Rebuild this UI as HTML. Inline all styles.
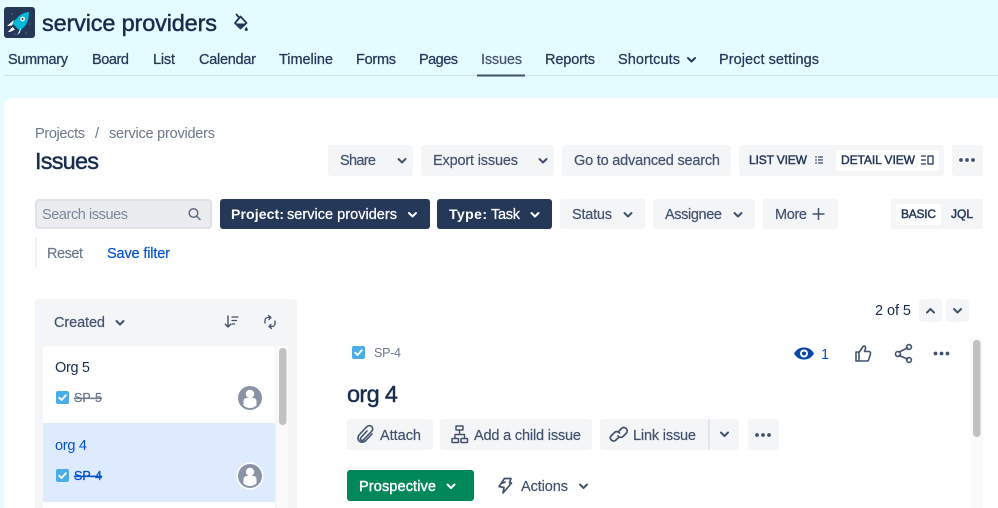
<!DOCTYPE html>
<html lang="en"><head><meta charset="utf-8"><title>Issues - service providers</title>
<style>
html,body{margin:0;padding:0;background:#E4FBFF}
body{width:998px;height:508px;overflow:hidden}
svg{display:block;filter:blur(.3px)}
text{font-family:"Liberation Sans",sans-serif;font-size:14.5px;white-space:pre}
.n{fill:#253858;stroke:#253858;stroke-width:.25;font-size:14.5px}
.b{fill:#42526E;stroke:#42526E;stroke-width:.2;font-size:14.5px}
.w{fill:#fff;stroke:#fff;stroke-width:.25;font-size:14.5px}
.g{fill:#6B778C;font-size:14.5px}
.h{fill:#172B4D;stroke:#172B4D;stroke-width:.45;font-size:23.5px}
.c{fill:#253858;stroke:#253858;stroke-width:.45;font-size:12px}
.chev{fill:none;stroke-width:2;stroke-linecap:round;stroke-linejoin:round}
.ic{fill:none;stroke:#42526E;stroke-width:1.6;stroke-linecap:round;stroke-linejoin:round}
</style></head><body>
<svg width="998" height="508" viewBox="0 0 998 508" xmlns="http://www.w3.org/2000/svg">
<defs>
<g id="dn"><path class="chev" d="M-3.5-1.5 0 2 3.5-1.5"/></g>
<g id="chk"><rect width="13" height="13" rx="2" fill="#4BADE8"/><path d="M3.3 6.8 5.6 9 9.8 4.2" fill="none" stroke="#fff" stroke-width="1.9" stroke-linecap="round" stroke-linejoin="round"/></g>
<g id="av"><circle r="12" fill="#8993A4"/><circle cy="-4" r="4.2" fill="#fff"/><path d="M-6.5 7.5V3.5Q-6.5 0 -3 0H3Q6.5 0 6.5 3.5V7.5Q3.5 10 0 10T-6.5 7.5Z" fill="#fff"/></g>
<g id="dots"><circle cx="-6" r="1.9"/><circle r="1.9"/><circle cx="6" r="1.9"/></g>
</defs>

<!-- header -->
<rect width="998" height="508" fill="#E4FBFF"/>
<rect x="4" y="7" width="31" height="31" rx="3" fill="#253858"/>
<circle cx="12" cy="14" r=".7" fill="#5d6f8f"/><circle cx="30" cy="24" r=".7" fill="#5d6f8f"/><circle cx="26" cy="33" r=".7" fill="#5d6f8f"/><circle cx="15" cy="34" r=".7" fill="#5d6f8f"/>
<path d="M29 12C24 12.500 20 14.500 17 18L12 23 14.500 25.500 17.500 28.500 20 31 25 26C28 22.500 29 17 29 12Z" fill="#00B8D9"/>
<path d="M14 20 7 26 12 25.500Z M21 28 17 35 20 32.500Z M12.500 27 8 32 10 32 15 29.500Z" fill="#fff"/>
<circle cx="22.500" cy="19" r="2.400" fill="#fff"/><circle cx="22.500" cy="19" r="1" fill="#253858"/>

<text x="42" y="31" class="h" textLength="175">service providers</text>
<path d="M236.500 14.500 239 17.500" style="fill:none;stroke:#253858;stroke-width:1.800;stroke-linecap:round"/>
<path d="M240.500 16.500 246.500 23 240.500 28.500 235 23Z" fill="none" stroke="#253858" stroke-width="1.800" stroke-linejoin="round"/>
<path d="M235.500 23.500H246L240.500 28.500Z" fill="#253858"/>
<path d="M246.300 26.500C247 28 247.800 28.500 247.800 29.500A1.500 1.500 0 0 1 244.800 29.500C244.800 28.500 245.600 28 246.300 26.500Z" fill="#253858"/>

<text x="8" y="64" class="n" textLength="60">Summary</text>
<text x="92" y="64" class="n" textLength="37">Board</text>
<text x="153" y="64" class="n" textLength="22">List</text>
<text x="199" y="64" class="n" textLength="57">Calendar</text>
<text x="279" y="64" class="n" textLength="54">Timeline</text>
<text x="356" y="64" class="n" textLength="40">Forms</text>
<text x="419" y="64" class="n" textLength="39">Pages</text>
<text x="481" y="64" class="b" textLength="41">Issues</text>
<text x="545" y="64" class="n" textLength="50">Reports</text>
<text x="618" y="64" class="n" textLength="62">Shortcuts</text>
<use href="#dn" x="691.500" y="59.500" stroke="#253858"/>
<text x="719" y="64" class="n" textLength="100">Project settings</text>
<rect x="4" y="75" width="994" height="1" fill="#CDE3EA"/>
<rect x="477" y="74.500" width="48" height="2" fill="#42526E"/>

<!-- panel -->
<rect x="4" y="98" width="1010" height="430" rx="8" fill="#fff"/>

<text x="35" y="138" class="g" textLength="50">Projects</text>
<text x="95" y="138" class="g" textLength="4">/</text>
<text x="109" y="138" class="g" textLength="106">service providers</text>
<text x="35" y="169" class="h" textLength="64">Issues</text>

<!-- top actions -->
<g fill="#F4F5F7">
<rect x="328" y="145" width="85" height="31" rx="3"/>
<rect x="421" y="145" width="133" height="31" rx="3"/>
<rect x="562" y="145" width="169" height="31" rx="3"/>
<rect x="739" y="145" width="205" height="31" rx="3"/>
<rect x="952" y="145" width="31" height="31" rx="3"/>
<rect x="560" y="199" width="85" height="30" rx="3"/>
<rect x="653" y="199" width="102" height="30" rx="3"/>
<rect x="763" y="199" width="75" height="30" rx="3"/>
<rect x="891" y="199" width="92" height="30" rx="3"/>
</g>
<rect x="836" y="150" width="103" height="21" rx="3" fill="#fff"/>
<rect x="896" y="204" width="45" height="21" rx="3" fill="#fff"/>
<text x="340" y="165" class="b" textLength="36">Share</text>
<use href="#dn" x="402" y="160.500" stroke="#42526E"/>
<text x="433" y="165" class="b" textLength="85">Export issues</text>
<use href="#dn" x="543" y="160.500" stroke="#42526E"/>
<text x="574" y="165" class="b" textLength="146">Go to advanced search</text>
<text x="749" y="164" class="c" textLength="58">LIST VIEW</text>
<g fill="#42526E"><circle cx="816" cy="157" r=".9"/><circle cx="816" cy="160" r=".9"/><circle cx="816" cy="163" r=".9"/><rect x="818" y="156.300" width="5" height="1.300"/><rect x="818" y="159.300" width="5" height="1.300"/><rect x="818" y="162.300" width="5" height="1.300"/></g>
<text x="841" y="164" class="c" textLength="74">DETAIL VIEW</text>
<path d="M921 156H926M921 160H926M921 164H926" stroke="#253858" stroke-width="1.300" fill="none"/>
<rect x="928" y="156" width="5" height="8" fill="none" stroke="#253858" stroke-width="1.300"/>
<use href="#dots" x="967" y="160" fill="#42526E"/>

<!-- filters -->
<rect x="36" y="200" width="175" height="28" rx="3" fill="#EBECF0" stroke="#DFE1E6" stroke-width="2"/>
<text x="42" y="219" fill="#7A869A" style="font-size:14.5px" textLength="86">Search issues</text>
<circle cx="193.500" cy="213" r="4.300" fill="none" stroke="#5E6C84" stroke-width="1.500"/>
<path d="M197 216.500 200 219.500" stroke="#5E6C84" stroke-width="1.500" stroke-linecap="round"/>
<rect x="220" y="199" width="210" height="30" rx="3" fill="#253858"/>
<text x="231" y="219" style="font-size:14px;font-weight:700;fill:#fff" textLength="53">Project:</text>
<text x="287" y="219" class="w" textLength="110">service providers</text>
<use href="#dn" x="412.500" y="214.500" stroke="#fff"/>
<rect x="437" y="199" width="115" height="30" rx="3" fill="#253858"/>
<text x="449" y="219" style="font-size:14px;font-weight:700;fill:#fff" textLength="38">Type:</text>
<text x="491" y="219" class="w" textLength="29">Task</text>
<use href="#dn" x="535" y="214.500" stroke="#fff"/>
<text x="572" y="219" class="b" textLength="40">Status</text>
<use href="#dn" x="628" y="214.500" stroke="#42526E"/>
<text x="665" y="219" class="b" textLength="57">Assignee</text>
<use href="#dn" x="738" y="214.500" stroke="#42526E"/>
<text x="775" y="219" class="b" textLength="32">More</text>
<path d="M818.500 208V220M812.500 214H824.500" stroke="#42526E" stroke-width="1.500"/>
<text x="901" y="218" class="c" textLength="35">BASIC</text>
<text x="951" y="218" class="c" textLength="22">JQL</text>

<rect x="35" y="237" width="2" height="31" fill="#F1F2F4"/>
<text x="47" y="258" class="g" style="stroke:#6B778C;stroke-width:.15" textLength="36">Reset</text>
<text x="107" y="258" style="font-size:14.5px;fill:#0052CC;stroke:#0052CC;stroke-width:.2" textLength="63">Save filter</text>

<!-- left list -->
<rect x="35" y="299" width="262" height="230" rx="3" fill="#F4F5F7"/>
<text x="54" y="327" class="b" textLength="51">Created</text>
<use href="#dn" x="120" y="322.500" stroke="#42526E"/>
<path d="M228 316V327M225.300 324.300 228 327 230.700 324.300" class="ic" style="stroke-width:1.400"/>
<path d="M232 317H238M232 320.500H236.500M232 324H234.500" class="ic" style="stroke-width:1.300"/>
<path d="M265 323V320.500C265 318.500 266.500 317.500 268 317.500H270.500M268.500 315.500 271 317.500 269 319.500M275 321V323.500C275 325.500 273.500 326.500 272 326.500H269.500M271.500 328.500 269 326.500 271 324.500" class="ic" style="stroke-width:1.300"/>

<rect x="43" y="346" width="232" height="170" rx="3" fill="#fff"/>
<path d="M43 423H275V502H43Z" fill="#DEEBFF"/>
<rect x="277" y="346" width="11" height="170" fill="#FAFAFA"/>
<rect x="279" y="348" width="7.500" height="77" rx="3.500" fill="#C1C1C1"/>
<text x="55" y="372" style="font-size:14.5px;fill:#172B4D" textLength="35">Org 5</text>
<use href="#chk" x="56" y="391"/>
<text x="74" y="402" style="font-size:12.500px;fill:#6B778C;stroke:#6B778C;stroke-width:.2;text-decoration:line-through" textLength="28">SP-5</text>
<use href="#av" x="250" y="398"/>
<text x="55" y="450" style="font-size:14.5px;fill:#0052CC" textLength="32">org 4</text>
<use href="#chk" x="56" y="469"/>
<text x="74" y="480" style="font-size:12.500px;fill:#0052CC;stroke:#0052CC;stroke-width:.3;text-decoration:line-through" textLength="28">SP-4</text>
<circle cx="250" cy="476" r="13.500" fill="#fff"/>
<use href="#av" x="250" y="476"/>

<!-- pager -->
<text x="875" y="315" style="font-size:14.5px;fill:#172B4D" textLength="36">2 of 5</text>
<rect x="919" y="299" width="23" height="23" rx="3" fill="#F4F5F7"/>
<rect x="946" y="299" width="23" height="23" rx="3" fill="#F4F5F7"/>
<path class="chev" stroke="#42526E" d="M927 312.500 930.500 309 934 312.500"/>
<use href="#dn" x="957.500" y="310.500" stroke="#42526E"/>

<rect x="970" y="337" width="13" height="180" fill="#FAFAFA"/>
<rect x="973" y="340" width="7.500" height="97" rx="3.500" fill="#C1C1C1"/>

<!-- detail -->
<use href="#chk" x="352" y="346"/>
<text x="374" y="357" style="font-size:12.500px;fill:#6B778C" textLength="27">SP-4</text>
<path d="M794 353.500C797 348.500 800.500 347.500 804 347.500S811 348.500 814 353.500C811 358.500 807.500 359.500 804 359.500S797 358.500 794 353.500Z" fill="#0747A6"/>
<circle cx="804" cy="353.500" r="4" fill="#fff"/><circle cx="804" cy="353.500" r="2" fill="#0747A6"/>
<text x="821" y="359" style="font-size:14.5px;fill:#0052CC" textLength="7">1</text>
<path d="M856 352H859V361H856ZM859 352.500 863 346.500C864.500 345.500 866 346.500 865.500 348.500L864.500 351.500H869C870.500 351.500 870.800 353 870.300 354.500L868.800 359.500C868.500 360.500 867.800 361 867 361H859" class="ic" style="stroke-width:1.600"/>
<path d="M899 352 907.500 348M899 355.500 907.500 359" class="ic" style="stroke-width:1.600"/>
<circle cx="898" cy="354" r="2.500" class="ic"/><circle cx="909" cy="347" r="2.400" class="ic"/><circle cx="909" cy="360" r="2.400" class="ic"/>
<use href="#dots" x="941.500" y="353.500" fill="#42526E"/>

<text x="347" y="402" class="h" textLength="51">org 4</text>

<g fill="#F4F5F7">
<rect x="347" y="419" width="86" height="31" rx="3"/>
<rect x="440" y="419" width="152" height="31" rx="3"/>
<rect x="600" y="419" width="108" height="31" rx="3"/>
<rect x="710" y="419" width="29" height="31" rx="3"/>
<rect x="748" y="419" width="31" height="31" rx="3"/>
</g>
<rect x="708" y="419" width="2" height="31" fill="#E3E4EA"/>
<path d="M367 431 361 437.500C359.300 439.500 361.500 441.500 363.500 439.800L371.500 431.500C375 427.500 370 423.500 366.500 427L359.500 434.500C355 439.500 361 445 365.800 440.500L372 434" class="ic" style="stroke-width:1.600"/>
<text x="380" y="440" class="b" textLength="41">Attach</text>
<rect x="456" y="426" width="7" height="4" rx=".5" class="ic" style="stroke-width:1.500"/>
<rect x="452" y="438.500" width="6.500" height="4" rx=".5" class="ic" style="stroke-width:1.500"/>
<rect x="461" y="438.500" width="6.500" height="4" rx=".5" class="ic" style="stroke-width:1.500"/>
<path d="M459.500 430V434.500M455 438.500V434.500H464.500V438.500" class="ic" style="stroke-width:1.400"/>
<text x="474" y="440" class="b" textLength="107">Add a child issue</text>
<path d="M618.500 437.500 616 440C613 443 608 438.500 611.500 435.500L614.500 432.500C616 431 618.500 431.500 619.500 433M619 431 621.500 428.500C624.500 425.500 629.500 430 626 433.500L623 436.500C621.500 438 619 437.500 618 436" class="ic" style="stroke-width:1.700"/>
<text x="633" y="440" class="b" textLength="63">Link issue</text>
<use href="#dn" x="724.500" y="434" stroke="#42526E"/>
<use href="#dots" x="763" y="435" fill="#42526E"/>

<rect x="347" y="470" width="127" height="31" rx="3" fill="#00875A"/>
<text x="359" y="491" class="w" textLength="77" style="stroke-width:.4">Prospective</text>
<use href="#dn" x="451" y="486" stroke="#fff"/>
<path d="M504.500 478.500H511L509.500 483H511.500L503 493 504 487.500 499 486.500ZM501.500 483.500 505 482" class="ic" style="stroke-width:1.700"/>
<text x="521" y="491" class="b" textLength="47">Actions</text>
<use href="#dn" x="583.500" y="486" stroke="#42526E"/>
</svg>
</body></html>
